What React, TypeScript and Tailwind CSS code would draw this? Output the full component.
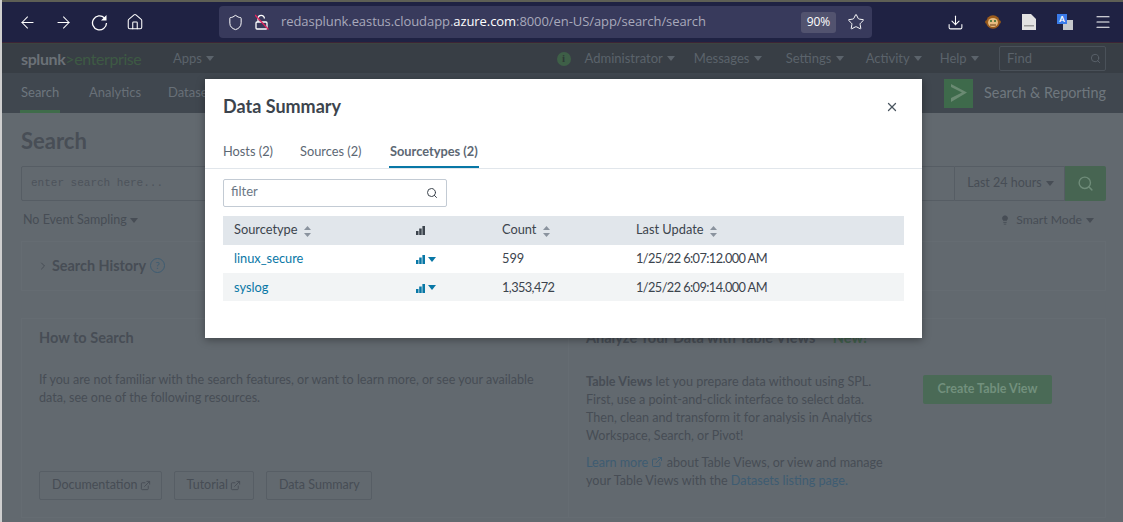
import { ChevronRight, Home, ArrowLeft, ArrowRight, Shield, Star, Download, Menu, Search, X, ExternalLink, Lightbulb } from "lucide-react";

const sans = "font-['Lato','Open_Sans',sans-serif]";

function Caret({ className = "" }: { className?: string }) {
  return (
    <svg width="8" height="5" viewBox="0 0 8 5" className={"inline-block " + className}>
      <path d="M0 0h8L4 5z" fill="currentColor" />
    </svg>
  );
}

function SortIcon() {
  return (
    <svg width="7" height="11" viewBox="0 0 7 11" className="ml-[3px] inline-block text-[#8a939e]">
      <path d="M3.500 0 7 4H0zM3.500 11 0 7h7z" fill="currentColor" />
    </svg>
  );
}

function Bars({ className = "" }: { className?: string }) {
  return (
    <svg width="9" height="9" viewBox="0 0 9 9" className={"inline-block " + className}>
      <path d="M0 5h2.500v4H0zM3.200 2.500h2.500V9H3.200zM6.400 0H9v9H6.400z" fill="currentColor" />
    </svg>
  );
}

function Toolbar() {
  return (
    <div className="flex h-[40px] items-center bg-[#1f2243] text-white">
      <div className="flex w-[217px] items-center pl-[16px]">
        <ArrowLeft size={19} strokeWidth={1.3} />
        <ArrowRight size={19} strokeWidth={1.3} className="ml-[17px]" />
        <svg width="17" height="17" viewBox="0 0 17 17" className="ml-[18px]">
          <path d="M13.500 4A7 7 0 1 0 15.500 9" fill="none" stroke="#fff" strokeWidth="1.300" />
          <path d="M15.500 1v5.500H10z" fill="#fff" />
        </svg>
        <Home size={18} strokeWidth={1.4} className="ml-[18px]" />
      </div>
      <div className="flex h-[32px] w-[653px] items-center rounded-[4px] bg-[#383a5c] pl-[8px] font-['Open_Sans',sans-serif] text-[13px] tracking-[-0.07px] text-[#a8a9bb]">
        <Shield size={17} strokeWidth={1.4} className="text-white" />
        <svg width="14" height="16" viewBox="0 0 14 16" className="ml-[11px]">
          <path d="M3 8V4.500a3.200 3.200 0 0 1 6.400 0" fill="none" stroke="#fff" strokeWidth="1.300" />
          <rect x="1" y="8" width="11" height="7" rx="1" fill="none" stroke="#fff" strokeWidth="1.300" />
          <path d="M0 1l13.500 14.500" stroke="#e0245e" strokeWidth="1.400" />
        </svg>
        <span className="ml-[12px]">
          redasplunk.eastus.cloudapp.<span className="text-white">azure.com</span>:8000/en-US/app/search/search
        </span>
        <span className="ml-auto flex h-[21px] w-[35px] items-center justify-center rounded-[3px] bg-[#52536f] text-[12px] text-white">
          90%
        </span>
        <Star size={18} strokeWidth={1.3} className="ml-[11px] mr-[7px] text-white" />
      </div>
      <Download size={17} strokeWidth={1.5} className="ml-[75px]" />
      {/* monkey add-on */}
      <svg width="16" height="16" viewBox="0 0 16 16" className="ml-[21px]">
        <circle cx="1.800" cy="8" r="1.800" fill="#8f5519" />
        <circle cx="14.200" cy="8" r="1.800" fill="#8f5519" />
        <circle cx="8" cy="8" r="6.800" fill="#9c5c1c" />
        <ellipse cx="8" cy="8.500" rx="5" ry="4.500" fill="#e6bc80" />
        <circle cx="6" cy="7" r="1" fill="#2e6a2a" />
        <circle cx="10" cy="7" r="1" fill="#2e6a2a" />
        <path d="M5 11h6" stroke="#6b3a10" strokeWidth="1" />
      </svg>
      <svg width="14" height="16" viewBox="0 0 14 16" className="ml-[21px]">
        <path d="M0 0h9l5 5v11H0z" fill="#e2e2e2" />
        <rect x="2" y="11" width="10" height="1.500" fill="#9a9a9a" />
      </svg>
      <div className="relative ml-[21px] h-[16px] w-[16px]">
        <div className="absolute left-[6px] top-[6px] h-[10px] w-[10px] bg-[#c5c8cc]" />
        <div className="absolute left-0 top-0 flex h-[10px] w-[10px] items-center justify-center bg-[#3a7bea] text-[8px] font-bold leading-none">A</div>
      </div>
      <Menu size={18} strokeWidth={1.5} className="ml-[21px]" />
    </div>
  );
}

function TopNav() {
  const items = [
    ["Administrator", "mr-[19px]"],
    ["Messages", "mr-[24px]"],
    ["Settings", "mr-[22px]"],
    ["Activity", "mr-[18px]"],
    ["Help", "mr-[20px]"],
  ];
  return (
    <div className="flex h-[29px] items-center bg-[#383e45] pl-[19px] text-[13px] text-[#5b636b]">
      <span className="w-[152px] text-[16px] font-bold tracking-[-0.4px] text-[#6b7177]">
        splunk<span className="font-normal text-[#3e5a44]">&gt;enterprise</span>
      </span>
      <span>Apps <Caret className="mb-[2px] ml-[1px]" /></span>
      <div className="ml-auto flex items-center">
        <span className="flex h-[14px] w-[14px] items-center justify-center rounded-full bg-[#3e5f47] font-['Liberation_Serif',serif] text-[11px] font-bold leading-none text-[#2f3a37]">
          i
        </span>
        <div className="ml-[14px] flex">
          {items.map(([label, gap]) => (
            <span key={label} className={gap}>
              {label} <Caret className="mb-[2px] ml-[1px]" />
            </span>
          ))}
        </div>
        <div className="mr-[17px] flex h-[25px] w-[107px] items-center justify-between rounded-[2px] border border-[#4a5159] pl-[7px] pr-[4px]">
          Find <Search size={11} />
        </div>
      </div>
    </div>
  );
}

function SubNav() {
  return (
    <div className="flex h-[40px] items-center bg-[#40474f] pl-[19px] text-[13px] text-[#687078]">
      <span className="relative flex h-full w-[68px] items-center">
        <span className="text-[#6d767e]">Search</span>
        <span className="absolute bottom-0 left-[-1px] h-[3px] w-[40px] bg-[#3f6c4a]" />
      </span>
      <span className="w-[79px]">Analytics</span>
      <span>Datasets</span>
      <div className="ml-auto mr-[17px] flex items-center">
        <span className="flex h-[29px] w-[29px] items-center justify-center bg-[#3e6a4b] text-[#6a8a72]">
          <svg width="20" height="20" viewBox="0 0 20 20"><path d="M2 1l16 8.500L2 19v-4l11-5.500L2 4z" fill="currentColor" /></svg>
        </span>
        <span className="ml-[11px] text-[14.400px] text-[#6f777e]">Search &amp; Reporting</span>
      </div>
    </div>
  );
}

function Page() {
  return (
    <div className="flex-1 overflow-hidden bg-[#62696f] text-[#474d55]">
      <div className="pl-[19px] pr-[17px] pt-[15px]">
        <h1 className="text-[22px] font-bold leading-[26px] text-[#484e56]">Search</h1>
        <div className="mt-[12px] flex h-[35px] items-stretch">
          <div className="flex flex-1 items-center rounded-l-[2px] border border-[#565d64] pl-[9px] font-['Liberation_Mono',monospace] text-[11px] text-[#4d535b]">
            enter search here...
          </div>
          <div className="flex w-[110px] items-center justify-center border-y border-r border-[#565d64] pl-[2px] text-[12.500px]">
            Last 24 hours <Caret className="ml-[4px]" />
          </div>
          <div className="flex w-[41px] items-center justify-center rounded-r-[2px] bg-[#476552] text-[#6f8c79]">
            <Search size={17} strokeWidth={2} />
          </div>
        </div>
        <div className="mt-[10px] flex items-center justify-between pl-[2px] pr-[12px] text-[12.500px]">
          <span>No Event Sampling <Caret className="mb-[1px]" /></span>
          <span className="flex items-center text-[12.200px]">
            <Lightbulb size={10} fill="currentColor" className="mr-[6px]" />
            Smart Mode <Caret className="ml-[4px]" />
          </span>
        </div>
      </div>
      <div className="ml-[19px] mr-[17px] mt-[11px] flex h-[50px] items-center border border-[#656c72] pl-[15px]">
        <ChevronRight size={12} className="mr-[3px]" />
        <span className="text-[14.400px] font-bold">Search History</span>
        <span className="ml-[4px] flex h-[15px] w-[15px] items-center justify-center rounded-full border border-[#3e5c72] text-[10px] text-[#3e5c72]">?</span>
      </div>
      <div className="ml-[19px] mr-[17px] mt-[27px] flex h-[200px]">
        <div className="w-[547px] border-y border-l border-[#656c72] pl-[17px] pt-[8px]">
          <h2 className="text-[14.500px] font-bold">How to Search</h2>
          <p className="mt-[22px] w-[505px] text-[12.550px] leading-[18px]">
            If you are not familiar with the search features, or want to learn more, or see your available data, see one of the following resources.
          </p>
          <div className="mt-[64px] flex gap-[12px] text-[12.500px]">
            <span className="flex h-[29px] items-center rounded-[2px] border border-[#575e65] pl-[12px] pr-[10px]">
              Documentation <ExternalLink size={11} className="ml-[2px]" />
            </span>
            <span className="flex h-[29px] items-center rounded-[2px] border border-[#575e65] px-[12px]">
              Tutorial <ExternalLink size={11} className="ml-[2px]" />
            </span>
            <span className="flex h-[29px] items-center rounded-[2px] border border-[#575e65] pl-[12px] pr-[11px]">Data Summary</span>
          </div>
        </div>
        <div className="flex flex-1 border border-[#656c72] pl-[17px] pt-[8px]">
          <div className="w-[337px]">
            <h2 className="text-[14.500px] font-bold">
              Analyze Your Data with Table Views <span className="ml-[14px] text-[#41604c]">New!</span>
            </h2>
            <p className="mt-[24px] w-[300px] text-[12.600px] leading-[18px]">
              <b>Table Views</b> let you prepare data without using SPL. First, use a point-and-click interface to select data. Then, clean and transform it for analysis in Analytics Workspace, Search, or Pivot!
            </p>
            <p className="mt-[9px] w-[305px] text-[12.600px] leading-[18px]">
              <span className="text-[#3e5c72]">Learn more <ExternalLink size={12} className="mb-[2px] inline-block" /></span> about Table Views, or view and manage your Table Views with the <span className="text-[#3e5c72]">Datasets listing page.</span>
            </p>
          </div>
          <div className="pt-[48px]">
            <span className="flex h-[29px] w-[129px] items-center justify-center rounded-[2px] bg-[#4a6a56] text-[12.500px] font-bold text-[#72907d]">
              Create Table View
            </span>
          </div>
        </div>
      </div>
    </div>
  );
}

function Modal() {
  const rows = [
    ["linux_secure", "599", "1/25/22 6:07:12.000 AM"],
    ["syslog", "1,353,472", "1/25/22 6:09:14.000 AM"],
  ];
  return (
    <div className="absolute left-[205px] top-[79px] h-[259px] w-[717px] bg-white text-[#3c444d] shadow-[0_2px_8px_rgba(0,0,0,0.35)]">
      <div className="flex h-[55px] items-center justify-between pl-[18px] pr-[23px]">
        <h3 className="text-[18px] font-bold text-[#3c444d]">Data Summary</h3>
        <X size={14} strokeWidth={2.2} className="text-[#4a5560]" />
      </div>
      <div className="flex h-[35px] items-start border-b border-[#e1e6eb] pl-[18px] text-[12.800px]">
        <span className="w-[77px] pt-[8px] text-[#5c6773]">Hosts (2)</span>
        <span className="w-[89px] pt-[8px] text-[#5c6773]">Sources (2)</span>
        <span className="h-[34px] border-b-[2px] border-[#0877a6] px-[1px] pt-[8px] font-bold text-[#5c6773]">Sourcetypes (2)</span>
      </div>
      <div className="ml-[18px] mt-[10px] flex h-[28px] w-[224px] items-center justify-between rounded-[2px] border border-[#c3cbd4] pb-[2px] pl-[7px] pr-[8px] text-[13px] text-[#6b7785]">
        filter
        <Search size={12} strokeWidth={2} className="mt-[2px] text-[#3c444d]" />
      </div>
      <div className="mx-[18px] mt-[9px] text-[12.800px]">
        <div className="flex h-[29px] items-center bg-[#e1e6eb] pb-[1px] pl-[11px] text-[#3c444d]">
          <span className="w-[182px]">Sourcetype <SortIcon /></span>
          <span className="w-[86px]"><Bars className="mb-[1px]" /></span>
          <span className="w-[134px]">Count <SortIcon /></span>
          <span>Last Update <SortIcon /></span>
        </div>
        {rows.map(([name, count, updated], i) => (
          <div key={name} className={"flex h-[28px] items-center pl-[11px] " + (i % 2 ? "bg-[#f2f4f5] pt-[1px]" : "bg-white")}>
            <span className="w-[182px] text-[#0877a6]">{name}</span>
            <span className="w-[86px] text-[#0877a6]"><Bars className="mb-[1px]" /> <Caret className="mb-[2px]" /></span>
            <span className={"w-[134px] " + (i % 2 ? "tracking-[-0.6px]" : "")}>{count}</span>
            <span className="tracking-[-0.6px]">{updated}</span>
          </div>
        ))}
      </div>
    </div>
  );
}

export default function App() {
  return (
    <div className={"relative flex h-[522px] w-[1123px] flex-col overflow-hidden bg-[#cfcfcf] pl-[2px] " + sans}>
      <div className="h-[2px] bg-[#5e5f55]" />
      <Toolbar />
      <div className="h-[1px] bg-[#3c2436]" />
      <div className="h-[1px] bg-[#3b4440]" />
      <TopNav />
      <SubNav />
      <Page />
      <Modal />
    </div>
  );
}
